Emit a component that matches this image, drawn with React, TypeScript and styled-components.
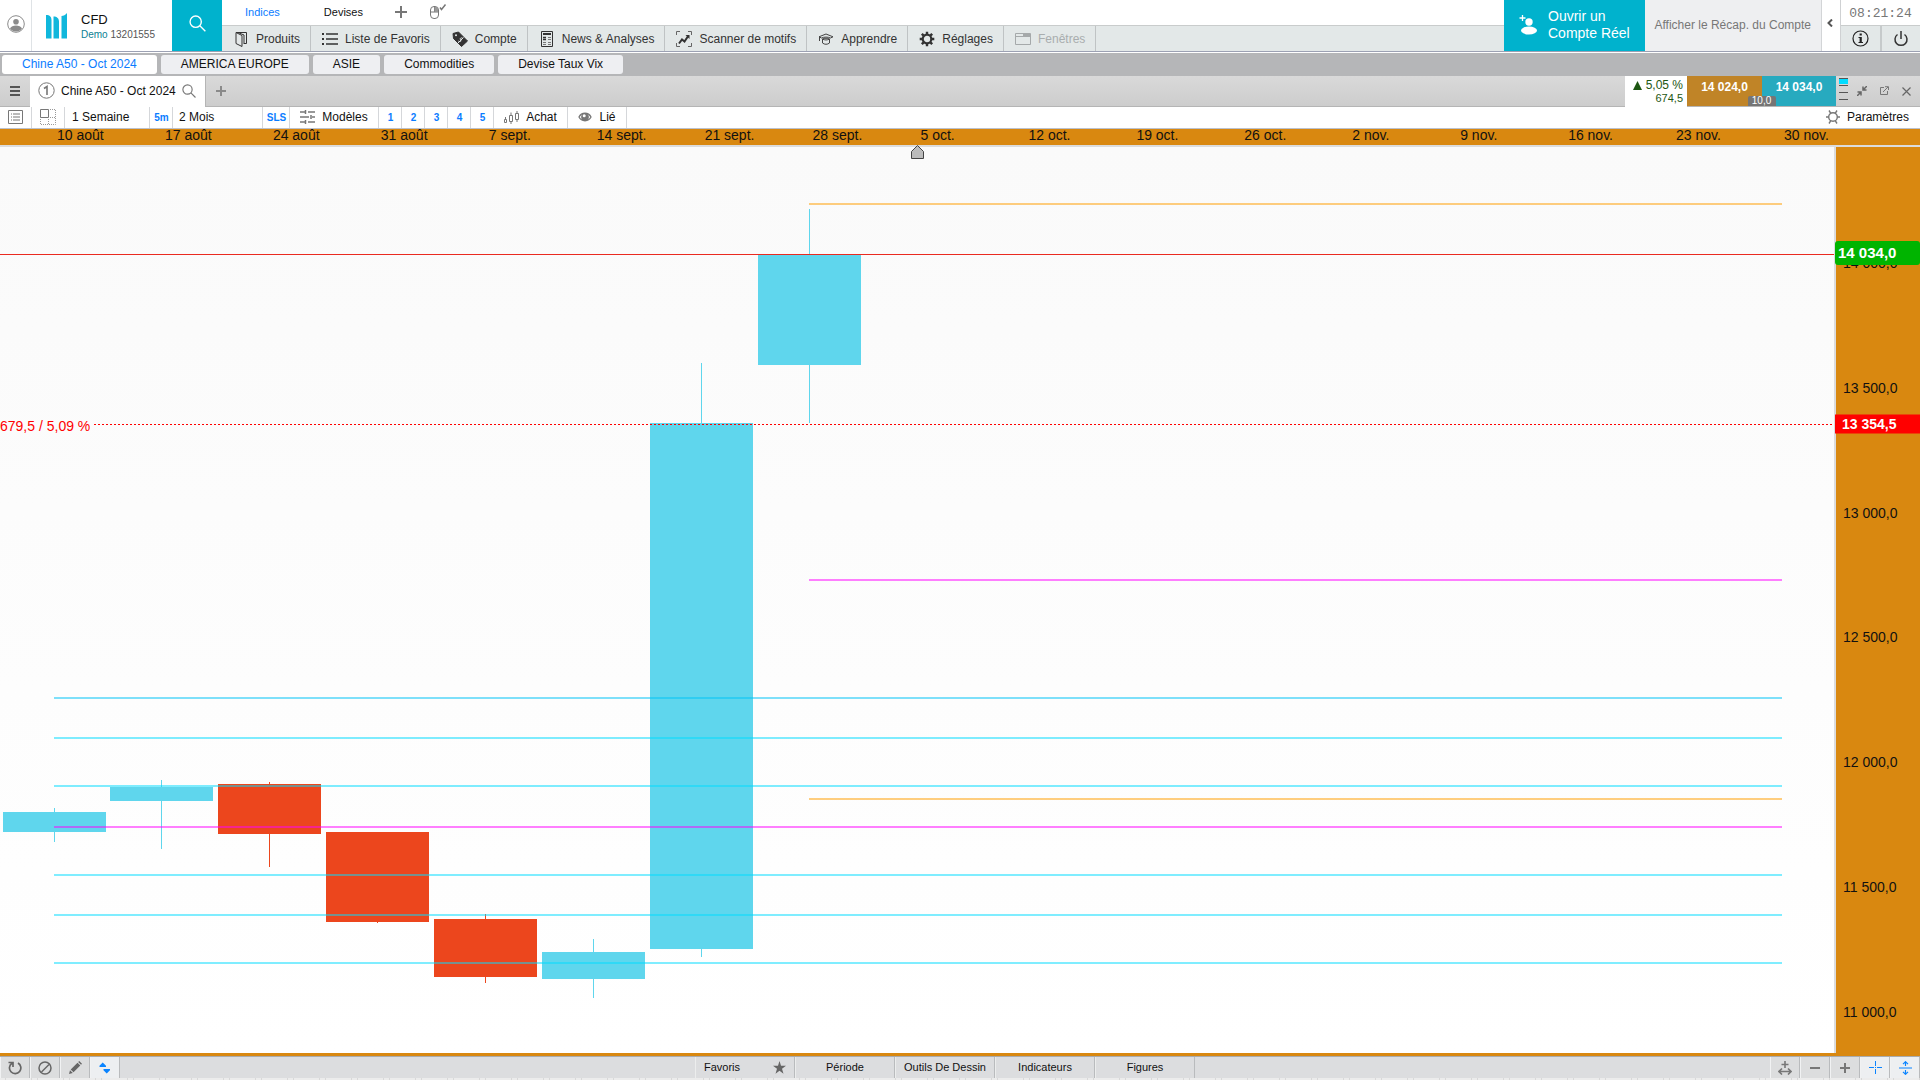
import React from "react";
import styled, { createGlobalStyle } from "styled-components";

const GlobalStyle = createGlobalStyle`
  *, *::before, *::after { box-sizing: border-box; }
  body {
    margin: 0;
    font-family: "Liberation Sans", Arial, sans-serif;
    font-size: 12px;
    color: #111;
    background: #fff;
    overflow: hidden;
  }
  button {
    font: inherit;
    color: inherit;
    border: 0;
    padding: 0;
    background: none;
    cursor: pointer;
    white-space: nowrap;
  }
  svg { display: block; flex: none; }
`;

const ORANGE = "#d98810";
const CYAN = "#00b2cd";

const Page = styled.div`
  display: flex;
  flex-direction: column;
  height: 100vh;
`;

/* ---------- header ---------- */

const Header = styled.header`
  display: flex;
  height: 53px;
  flex: none;
  border-bottom: 1px solid #fff;
  box-shadow: inset 0 -1px #9ca1b3;
  padding-bottom: 1px;
`;

const AvatarButton = styled.button`
  width: 32px;
  border-right: 1px solid #dfe3e6;
  display: grid;
  place-items: center;
  padding-bottom: 4px;
`;

const Brand = styled.div`
  width: 140px;
  display: flex;
  align-items: center;
  gap: 14px;
  padding-left: 14px;
`;

const BrandName = styled.div`
  font-size: 13px;
  line-height: 18px;
`;

const BrandAccount = styled.div`
  font-size: 10px;
  line-height: 12px;
  color: #555;
  span { color: #0b7f93; }
`;

const SearchButton = styled.button`
  width: 50px;
  background: ${CYAN};
  display: grid;
  place-items: center;
  padding-bottom: 4px;
`;

const NavArea = styled.div`
  flex: 1;
  min-width: 0;
  display: flex;
  flex-direction: column;
`;

const TopNav = styled.nav`
  height: 25px;
  display: flex;
  align-items: center;
  padding: 0 0 2px 23px;
`;

const TopTab = styled.button<{ $active?: boolean; $space: number }>`
  font-size: 11px;
  color: ${(p) => (p.$active ? "#0a7cff" : "#111")};
  margin-right: ${(p) => p.$space}px;
`;

const MainNav = styled.nav`
  flex: 1;
  display: flex;
  background: #e3e8e8;
  border-top: 1px solid #c9cccc;
`;

const NavButton = styled.button`
  display: flex;
  align-items: center;
  gap: 7px;
  padding: 0 10px 0 11px;
  border-right: 1px solid #bfc3c4;
  color: #333;
  &:disabled { color: #a9adae; }
`;

const OpenAccount = styled.button`
  width: 141px;
  background: ${CYAN};
  color: #fff;
  font-size: 14px;
  line-height: 17px;
  text-align: left;
  display: flex;
  align-items: center;
  gap: 10px;
  padding: 0 0 2px 15px;
`;

const Summary = styled.button`
  width: 177px;
  background: #eeeff1;
  color: #777;
  text-align: right;
  border-right: 1px solid #d3d5d7;
  padding: 0 10px 2px 0;
`;

const Collapse = styled.button`
  width: 19px;
  display: grid;
  place-items: center;
  border-right: 1px solid #cfd1d3;
  padding: 0 2px 6px 0;
`;

const Corner = styled.div`
  width: 79px;
  display: flex;
  flex-direction: column;
`;

const Clock = styled.time`
  height: 25px;
  line-height: 28px;
  text-align: center;
  font-family: "Liberation Mono", monospace;
  font-size: 13px;
  color: #777;
`;

const CornerRow = styled.div`
  flex: 1;
  display: flex;
  border-top: 1px solid #c9cccc;
  background: #e3e8e8;
`;

const CornerButton = styled.button`
  flex: 1;
  display: grid;
  place-items: center;
  & + & { border-left: 2px solid #c6cacb; }
`;

/* ---------- workspaces ---------- */

const Workspaces = styled.nav`
  flex: none;
  height: 23px;
  background: #b5b6b8;
  display: flex;
  gap: 4px;
  padding: 2px;
`;

const Workspace = styled.button<{ $active?: boolean }>`
  border-radius: 3px;
  padding: 0 20px 2px;
  background: ${(p) => (p.$active ? "#fff" : "#eeeff2")};
  color: ${(p) => (p.$active ? "#0a7cff" : "#111")};
`;

/* ---------- chart tab bar ---------- */

const TabBar = styled.div`
  flex: none;
  height: 31px;
  display: flex;
  background: linear-gradient(#d9d9d9, #cdcdcd);
  border-bottom: 1px solid #b5b5b5;
  padding-right: 4px;
`;

const IconCell = styled.button<{ $width: number }>`
  width: ${(p) => p.$width}px;
  display: grid;
  place-items: center;
`;

const ChartTab = styled.button`
  display: flex;
  align-items: center;
  gap: 6px;
  padding: 0 9px 2px 8px;
  margin-bottom: -1px;
  background: #fff;
  border-right: 1px solid #b5b5b5;
`;

const Spacer = styled.div`
  flex: 1;
`;

const Change = styled.div`
  width: 62px;
  background: #fff;
  margin-bottom: -1px;
  padding: 2px 4px 0 0;
  text-align: right;
  color: #1d5712;
  line-height: 14px;
  white-space: nowrap;
`;

const ChangeLine = styled.div`
  display: flex;
  justify-content: flex-end;
  align-items: center;
  gap: 4px;
`;

const ChangePoints = styled.div`
  font-size: 11px;
  line-height: 12px;
`;

const Quotes = styled.div`
  position: relative;
  display: flex;
  color: #fff;
`;

const Quote = styled.button<{ $color: string }>`
  width: 75px;
  font-weight: bold;
  padding-bottom: 8px;
  background: ${(p) => p.$color};
  & + & { width: 74px; }
`;

const Spread = styled.span`
  position: absolute;
  left: 50%;
  bottom: 0;
  width: 28px;
  margin-left: -14px;
  background: #757575;
  border-radius: 2px 2px 0 0;
  text-align: center;
  font-size: 10px;
  line-height: 10px;
`;

/* ---------- toolbar ---------- */

const Toolbar = styled.div`
  flex: none;
  height: 22px;
  display: flex;
  border-bottom: 1px solid #bcc1cc;
`;

const Tool = styled.button<{ $width: number; $left?: number }>`
  width: ${(p) => p.$width}px;
  display: flex;
  align-items: center;
  justify-content: ${(p) => (p.$left ? "flex-start" : "center")};
  gap: 7px;
  padding-left: ${(p) => p.$left ?? 0}px;
  padding-bottom: 1px;
  border-right: 1px solid #d5d7da;
`;

const Shortcut = styled(Tool)`
  font-size: 10px;
  font-weight: bold;
  padding-top: 1px;
  padding-left: 1px;
  color: #0a7cff;
`;

const Settings = styled.button`
  display: flex;
  align-items: center;
  gap: 7px;
  padding: 0 11px 1px 0;
`;

/* ---------- chart ---------- */

const DateAxis = styled.div`
  flex: none;
  display: flex;
  height: 18px;
  padding: 0 28px 0 57px;
  background: ${ORANGE};
  border-bottom: 2px solid #dcdcdc;
  font-size: 14px;
  line-height: 12px;
`;

const DateLabel = styled.div`
  flex: 1 1 0;
  white-space: nowrap;
`;

const ChartArea = styled.main`
  flex: 1;
  min-height: 0;
  display: flex;
  background: ${ORANGE};
`;

const Plot = styled.div`
  position: relative;
  flex: 1;
  min-width: 0;
  margin-bottom: 3px;
  background: linear-gradient(#fafafa, #fff);
  border-right: 2px solid #dcdcdc;
`;

const PlotDrawing = styled.svg`
  position: absolute;
  inset: 0;
  width: 100%;
  height: 100%;
`;

const PlotNote = styled.div`
  position: absolute;
  left: 0;
  top: 30.8%;
  transform: translateY(-50%);
  font-size: 14px;
  line-height: 16px;
  color: #f00;
`;

const Marker = styled.svg`
  position: absolute;
  left: 50%;
  top: 0;
  margin: -2px 0 0 -6px;
`;

const PriceAxis = styled.aside`
  position: relative;
  width: 84px;
  display: flex;
  flex-direction: column;
  justify-content: space-between;
  padding: 108px 0 36px 7px;
  font-size: 14px;
  line-height: 16px;
`;

const PriceTag = styled.div<{ $live?: boolean }>`
  position: absolute;
  left: -1px;
  right: 0;
  top: ${(p) => (p.$live ? "11.7%" : "30.5%")};
  transform: translateY(-50%);
  padding-left: ${(p) => (p.$live ? 3 : 7)}px;
  border-radius: ${(p) => (p.$live ? 3 : 0)}px;
  background: ${(p) => (p.$live ? "#00b400" : "#f00")};
  color: #fff;
  font-weight: bold;
  font-size: ${(p) => (p.$live ? 15 : 14)}px;
  line-height: ${(p) => (p.$live ? 24 : 19)}px;
`;

/* ---------- footer ---------- */

const Footer = styled.footer`
  flex: none;
  height: 24px;
  display: flex;
  border-top: 1px solid #a9abad;
  padding-bottom: 2px;
  background:
    repeating-linear-gradient(90deg, #ececec 0 5px, #d8d8d8 5px 6px, #ececec 6px 31px, #d8d8d8 31px 32px)
    0 100% / 100% 2px no-repeat,
    #dcdddf;
`;

const FootButton = styled.button<{ $active?: boolean }>`
  width: 30px;
  display: grid;
  place-items: center;
  border-left: 1px solid #f1f2f3;
  border-right: 1px solid #b9bbbd;
  background: ${(p) => (p.$active ? "#edeff1" : "#dcddde")};
`;

const FootMenu = styled.button`
  width: 100px;
  font-size: 11px;
  padding-bottom: 2px;
  border-left: 1px solid #eceded;
  border-right: 1px solid #b9bbbd;
`;

const FootFavorites = styled(FootMenu)`
  display: flex;
  align-items: center;
  justify-content: space-between;
  padding: 0 8px 1px;
`;

/* ---------- icons ---------- */

type IconProps = { w?: number; h?: number; box?: string; color?: string; sw?: number; children: React.ReactNode };

const Icon = ({ w = 16, h = 16, box, color = "#333", sw = 1, children }: IconProps) => (
  <svg
    width={w}
    height={h}
    viewBox={box ?? `0 0 ${w} ${h}`}
    fill="none"
    stroke={color}
    strokeWidth={sw}
    aria-hidden="true"
  >
    {children}
  </svg>
);

const Magnifier = ({ size, color, sw }: { size: number; color: string; sw: number }) => (
  <Icon w={size} h={size} box="0 0 16 16" color={color} sw={sw}>
    <circle cx="6.3" cy="6.3" r="5.3" />
    <path d="M10.2 10.2 15.4 15.4" />
  </Icon>
);

const navItems = [
  {
    label: "Produits",
    icon: (
      <Icon>
        <path d="M3 1.5h10.500v11H11M3 1.500v11l6 3V4.500L3 1.500M5 1.500l6 2.500v9" />
      </Icon>
    ),
  },
  {
    label: "Liste de Favoris",
    icon: (
      <Icon sw={2}>
        <path d="M4 3h12M4 8h12M4 13h12" strokeWidth="1.500" />
        <path d="M0 3h2M0 8h2M0 13h2" />
      </Icon>
    ),
  },
  {
    label: "Compte",
    icon: (
      <Icon>
        <path d="M1 2.500 6.500 1 15.500 10 9.500 15.500 1.500 7.500Z" fill="#333" strokeLinejoin="round" />
        <circle cx="4" cy="4.200" r="1" fill="#e3e8e8" stroke="none" />
        <path d="M11 7.500c-2-1.500-3.500 0-2.500 1.300s0 2.700-2.200 1.200M6 12l5.500-5.500" stroke="#e3e8e8" />
      </Icon>
    ),
  },
  {
    label: "News & Analyses",
    icon: (
      <Icon>
        <path d="M2.500.5h11v15h-11z" />
        <path d="M4 3h8" strokeWidth="2" />
        <path d="M4 6.500h3M4 8.500h3" strokeWidth="1.500" />
        <path d="M9 6.500h3M9 8.500h3M4 11.500h3M9 11.500h3M4 13.500h3M9 13.500h3" stroke="#777" />
      </Icon>
    ),
  },
  {
    label: "Scanner de motifs",
    icon: (
      <Icon>
        <path d="M.5 4V.5H4M12 .5h3.500V4M15.500 12v3.500H12M4 15.500H.5V12" stroke="#666" />
        <path d="M3 12.500 6 8.500l2.500 2L12.500 4.500" strokeWidth="2" />
        <path d="M9.500 4h4v4Z" fill="#333" stroke="none" />
      </Icon>
    ),
  },
  {
    label: "Apprendre",
    icon: (
      <Icon>
        <path d="M1 5.800 8 3l7 2.800-2.500 1.200C10 5.800 6 5.800 3.500 7L1 5.800ZM1.500 6v4M4.500 8v4c2 1.700 5 1.700 7 0V8C9.500 7 6.500 7 4.500 8c2 1.300 5 1.300 7 0" stroke="#444" />
      </Icon>
    ),
  },
  {
    label: "Réglages",
    icon: (
      <Icon>
        <circle cx="8" cy="8" r="4.300" strokeWidth="2.200" />
        <path d="M8 .7v2.600M8 12.700v2.600M.7 8h2.600M12.700 8h2.600M2.800 2.800l1.900 1.900M11.300 11.300l1.900 1.900M13.200 2.800l-1.900 1.900M4.700 11.300l-1.900 1.900" strokeWidth="2.400" />
      </Icon>
    ),
  },
  {
    label: "Fenêtres",
    disabled: true,
    icon: (
      <Icon color="#a5a9aa">
        <path d="M.5 2.500h15v11H.5zM.5 5.500h15" />
        <path d="M8 4h7" strokeWidth="2" />
      </Icon>
    ),
  },
];

/* ---------- data ---------- */

const dates = [
  "10 août", "17 août", "24 août", "31 août", "7 sept.", "14 sept.", "21 sept.", "28 sept.", "5 oct.",
  "12 oct.", "19 oct.", "26 oct.", "2 nov.", "9 nov.", "16 nov.", "23 nov.", "30 nov.",
];

const prices = ["14 000,0", "13 500,0", "13 000,0", "12 500,0", "12 000,0", "11 500,0", "11 000,0"];

// y holds high, body top, body bottom, low
const candles: { x: number; wick: number; y: [number, number, number, number]; up: boolean }[] = [
  { x: 3, wick: 54, y: [661, 665, 685, 695], up: true },
  { x: 110, wick: 161, y: [633, 640, 654, 702], up: true },
  { x: 218, wick: 269, y: [635, 637, 687, 720], up: false },
  { x: 326, wick: 377, y: [685, 685, 775, 776], up: false },
  { x: 434, wick: 485, y: [767, 772, 830, 836], up: false },
  { x: 542, wick: 593, y: [792, 805, 832, 851], up: true },
  { x: 650, wick: 701, y: [216, 276, 802, 810], up: true },
  { x: 758, wick: 809, y: [62, 108, 218, 276], up: true },
];

const levels = [
  { x: 809, y: 56, color: "#ff9d00" },
  { x: 809, y: 432, color: "#ff00ff" },
  { x: 54, y: 550, color: "#00c4f8" },
  { x: 54, y: 590, color: "#00dcff" },
  { x: 54, y: 638, color: "#00dcff" },
  { x: 809, y: 651, color: "#ff9d00" },
  { x: 54, y: 679, color: "#ff00ff" },
  { x: 54, y: 727, color: "#00dcff" },
  { x: 54, y: 767, color: "#00dcff" },
  { x: 54, y: 815, color: "#00dcff" },
];

const ChartDrawing = () => (
  <PlotDrawing viewBox="0 0 1834 906" preserveAspectRatio="none" shapeRendering="crispEdges" role="img" aria-label="Chine A50 - Oct 2024">
    {candles.map(({ x, wick, y, up }) => (
      <g key={x} fill={up ? "#5fd6ed" : "#ec461d"}>
        <rect x={wick} y={y[0]} width="1" height={y[3] - y[0]} />
        <rect x={x} y={y[1]} width="103" height={y[2] - y[1]} />
      </g>
    ))}
    {levels.map((l) => (
      <rect key={l.y} x={l.x} y={l.y} width={1782 - l.x} height="2" fill={l.color} fillOpacity=".5" />
    ))}
    <rect x="0" y="107" width="1834" height="1" fill="#ea2a20" />
    <path d="M94 277.500H1834" stroke="#f00" strokeDasharray="2 2" />
  </PlotDrawing>
);

export default function App() {
  return (
    <Page>
      <GlobalStyle />
      <Header>
        <AvatarButton aria-label="Profil">
          <Icon w={18} h={18} color="#8b8b8b">
            <circle cx="9" cy="9" r="8.300" />
            <circle cx="9" cy="6.800" r="2.800" fill="#8b8b8b" stroke="none" />
            <path d="M3 13.500c1.500-4 10.500-4 12 0-2.500 4-9.500 4-12 0Z" fill="#8b8b8b" stroke="none" />
          </Icon>
        </AvatarButton>
        <Brand>
          <Icon w={21} h={26} color="none">
            <path d="M0 2c4 0 5.500 2 5.500 5v18.500H0ZM7.500 3.500c3.500 0 5.500 2 5.500 5v17H7.500ZM15.500 3c2 0 4-1 5.500-3v25.500h-5.500Z" fill="#10b7dc" />
          </Icon>
          <div>
            <BrandName>CFD</BrandName>
            <BrandAccount><span>Demo</span> 13201555</BrandAccount>
          </div>
        </Brand>
        <SearchButton aria-label="Rechercher">
          <Magnifier size={17} color="#fff" sw={1.3} />
        </SearchButton>
        <NavArea>
          <TopNav>
            <TopTab $active $space={44}>Indices</TopTab>
            <TopTab $space={32}>Devises</TopTab>
            <TopTab $space={22} aria-label="Ajouter">
              <Icon w={12} h={12} color="#777" sw={2}><path d="M6 0v12M0 6h12" /></Icon>
            </TopTab>
            <TopTab $space={0} aria-label="Trading en un clic">
              <Icon w={18} h={16} color="#777">
                <rect x="1.500" y="2.500" width="8" height="12" rx="3.500" />
                <path d="M1.500 8h8M5.500 2.500v5.500" />
                <path d="M5.500 3H9v5H5.500Z" fill="#999" stroke="none" />
                <path d="m11 3.500 1.500 2L16.500.5" strokeWidth="1.500" />
              </Icon>
            </TopTab>
          </TopNav>
          <MainNav>
            {navItems.map((n) => (
              <NavButton key={n.label} disabled={n.disabled}>{n.icon}{n.label}</NavButton>
            ))}
          </MainNav>
        </NavArea>
        <OpenAccount>
          <Icon w={19} h={20} color="#fff" sw={1.3}>
            <path d="M3.500 0v6M.5 3h6" />
            <circle cx="10" cy="7" r="3.700" fill="#fff" stroke="none" />
            <ellipse cx="10" cy="15.500" rx="8" ry="4" fill="#fff" stroke="none" />
          </Icon>
          <span>Ouvrir un<br />Compte Réel</span>
        </OpenAccount>
        <Summary>Afficher le Récap. du Compte</Summary>
        <Collapse aria-label="Réduire">
          <Icon w={6} h={8} color="#555" sw={2}><path d="M5 .5 1.500 4 5 7.500" /></Icon>
        </Collapse>
        <Corner>
          <Clock>08:21:24</Clock>
          <CornerRow>
            <CornerButton aria-label="Informations">
              <Icon w={17} h={17} color="#222" sw={1.2}>
                <circle cx="8.500" cy="8.500" r="7.500" />
                <path d="M8.700 3.500v2M8.700 7v6" strokeWidth="2.200" />
                <path d="M6.500 7.500h2M6.500 12.500h4.500" />
              </Icon>
            </CornerButton>
            <CornerButton aria-label="Déconnexion">
              <Icon w={16} h={16} color="#333" sw={1.5}>
                <path d="M4.500 3.500a6 6 0 1 0 7 0M8 0v8" />
              </Icon>
            </CornerButton>
          </CornerRow>
        </Corner>
      </Header>

      <Workspaces>
        <Workspace $active>Chine A50 - Oct 2024</Workspace>
        <Workspace>AMERICA EUROPE</Workspace>
        <Workspace>ASIE</Workspace>
        <Workspace>Commodities</Workspace>
        <Workspace>Devise Taux Vix</Workspace>
      </Workspaces>

      <TabBar>
        <IconCell $width={30} aria-label="Menu">
          <Icon w={10} h={10} color="#555" sw={2}><path d="M0 1h10M0 5h10M0 9h10" /></Icon>
        </IconCell>
        <ChartTab>
          <Icon w={17} h={17} color="#777">
            <circle cx="8.500" cy="8.500" r="7.700" />
            <path d="M6 6.500 9 4.500V13" strokeWidth="1.600" />
          </Icon>
          Chine A50 - Oct 2024
          <Magnifier size={14} color="#777" sw={1.3} />
        </ChartTab>
        <IconCell $width={30} aria-label="Nouvel onglet">
          <Icon w={10} h={10} color="#8a8a8a" sw={2}><path d="M5 0v10M0 5h10" /></Icon>
        </IconCell>
        <Spacer />
        <Change>
          <ChangeLine>
            <Icon w={9} h={9} color="none"><path d="M4.500 0 9 9H0Z" fill="#1d5712" /></Icon>
            5,05 %
          </ChangeLine>
          <ChangePoints>674,5</ChangePoints>
        </Change>
        <Quotes>
          <Quote $color="#c08427">14 024,0</Quote>
          <Quote $color="#27aabf">14 034,0</Quote>
          <Spread>10,0</Spread>
        </Quotes>
        <IconCell $width={16} aria-label="Profondeur">
          <Icon w={10} h={27} color="#555">
            <path d="M0 0h9v6H0Z" fill="#00dcff" stroke="none" />
            <path d="M0 .5h9M0 7.500h9M0 14.500h9M0 21.500h9" />
          </Icon>
        </IconCell>
        <IconCell $width={20} aria-label="Réduire le graphique">
          <Icon w={10} h={10} color="#666" sw={1.5}>
            <path d="M10 0 6.500 3.500M6 .5v3.500h3.500M0 10l3.500-3.500M.5 6h3.500v3.500" />
          </Icon>
        </IconCell>
        <IconCell $width={24} aria-label="Détacher">
          <Icon w={10} h={10} color="#777">
            <path d="M5 1.500H1.500v7h7V5M4 6l5-5M6 .7h3.500V4" />
          </Icon>
        </IconCell>
        <IconCell $width={20} aria-label="Fermer">
          <Icon w={9} h={9} color="#666" sw={1.2}><path d="m.5.5 8 8M8.500.5l-8 8" /></Icon>
        </IconCell>
      </TabBar>

      <Toolbar>
        <Tool $width={32} aria-label="Liste">
          <Icon w={15} h={14} color="#777">
            <path d="M.5.5h14v13H.5zM5 4h7M5 7h7M5 10h7M3 4h1M3 7h1M3 10h1" />
          </Icon>
        </Tool>
        <Tool $width={33} aria-label="Disposition">
          <Icon w={16} h={16} color="#777">
            <path d="M.5.500h8v8H.5z" />
            <path d="M10 .5h5.500v15H.5V10M10 8.500h5.500M8.500 10v5.500" stroke="#999" strokeDasharray="1 1" />
          </Icon>
        </Tool>
        <Tool $width={85} $left={7}>1 Semaine</Tool>
        <Shortcut $width={23}>5m</Shortcut>
        <Tool $width={90} $left={6}>2 Mois</Tool>
        <Shortcut $width={27}>SLS</Shortcut>
        <Tool $width={89}>
          <Icon w={15} h={14} color="#777" sw={1.5}>
            <path d="M0 2h5M8 2h7M0 7h9M12 7h3M0 12h5M8 12h7" />
            <path d="M5.500 0v4M11 5v4M5.500 10v4" />
          </Icon>
          Modèles
        </Tool>
        {["1", "2", "3", "4", "5"].map((n) => (
          <Shortcut key={n} $width={23}>{n}</Shortcut>
        ))}
        <Tool $width={74}>
          <Icon w={15} h={13} color="#777">
            <path d="M.5 8.500h2v3h-2zM5.500 4.500h3v6h-3zM11.500 2.500h3v6h-3zM7 1.500v3M7 10.500V13M13 0v2.500M13 8.500V11M1.500 6v2" />
          </Icon>
          Achat
        </Tool>
        <Tool $width={59}>
          <Icon w={14} h={12} color="#777" sw={1.3}>
            <path d="M1 6c2.500-5 9.500-5 12 0-2.500 5-9.500 5-12 0Z" />
            <circle cx="7" cy="6" r="3.200" fill="#777" />
            <circle cx="6.200" cy="4.800" r="1.500" fill="#fff" stroke="none" />
          </Icon>
          Lié
        </Tool>
        <Spacer />
        <Settings>
          <Icon w={14} h={14} color="#777" sw={1.4}>
            <circle cx="7" cy="7" r="4.300" />
            <path d="M0 7h2.700M11.300 7H14M3 .5l1.800 2.800M11 .5 9.200 3.300M3 13.500l1.800-2.800M11 13.500l-1.800-2.800" />
          </Icon>
          Paramètres
        </Settings>
      </Toolbar>

      <DateAxis>
        {dates.map((d) => <DateLabel key={d}>{d}</DateLabel>)}
      </DateAxis>

      <ChartArea>
        <Plot>
          <ChartDrawing />
          <PlotNote>679,5 / 5,09 %</PlotNote>
          <Marker width="13" height="14" viewBox="0 0 13 14" fill="#bbb" stroke="#444">
            <path d="M.5 13.500V6.500L6.500.5l6 6v7Z" />
          </Marker>
        </Plot>
        <PriceAxis>
          {prices.map((p) => <div key={p}>{p}</div>)}
          <PriceTag $live>14 034,0</PriceTag>
          <PriceTag>13 354,5</PriceTag>
        </PriceAxis>
      </ChartArea>

      <Footer>
        <FootButton aria-label="Actualiser">
          <Icon w={14} h={14} color="#666" sw={1.7}>
            <path d="M4 2.200a5.700 5.700 0 1 0 6-.2M.5 1.500H5v4.500" />
          </Icon>
        </FootButton>
        <FootButton aria-label="Effacer">
          <Icon w={14} h={14} color="#666" sw={1.5}>
            <circle cx="7" cy="7" r="6" /><path d="M3.500 11 11 3.500" />
          </Icon>
        </FootButton>
        <FootButton aria-label="Dessiner">
          <Icon w={13} h={13} color="none">
            <path d="M0 13 1 9.200 3.800 12ZM1.700 8.500 8.500 1.700 11.300 4.500 4.500 11.300ZM9.200 1 10.200 0 13 2.800 12 3.800Z" fill="#666" />
          </Icon>
        </FootButton>
        <FootButton $active aria-label="Haut et bas">
          <Icon w={12} h={12} color="none">
            <path d="M.5 5V3.700L3.700.5 7 3.700V5ZM4.500 7H11v1.300L7.700 11.500 4.500 8.300Z" fill="#0a84ff" />
          </Icon>
        </FootButton>
        <Spacer />
        <FootFavorites>
          Favoris
          <Icon w={13} h={13} color="none">
            <path d="M6.500 0 8 4.800h5L9 7.800l1.500 5-4-3-4 3 1.500-5-4-3h5Z" fill="#666" />
          </Icon>
        </FootFavorites>
        <FootMenu>Période</FootMenu>
        <FootMenu>Outils De Dessin</FootMenu>
        <FootMenu>Indicateurs</FootMenu>
        <FootMenu>Figures</FootMenu>
        <Spacer />
        <FootButton aria-label="Ajuster la largeur">
          <Icon w={14} h={14} color="#777" sw={1.6}>
            <path d="M7 0v7M3.500 3.500h7M1 10.500h12M4 7.500l-3 3 3 3M10 7.500l3 3-3 3" />
          </Icon>
        </FootButton>
        <FootButton aria-label="Zoom arrière">
          <Icon w={10} h={10} color="#777" sw={2}><path d="M0 5h10" /></Icon>
        </FootButton>
        <FootButton aria-label="Zoom avant">
          <Icon w={10} h={10} color="#777" sw={2}><path d="M5 0v10M0 5h10" /></Icon>
        </FootButton>
        <FootButton $active aria-label="Réticule">
          <Icon w={13} h={13} color="#0a84ff">
            <path d="M6.500 0v5M6.500 8v5M0 6.500h5M8 6.500h5M6 6.500h1" />
          </Icon>
        </FootButton>
        <FootButton $active aria-label="Échelle verticale">
          <Icon w={13} h={14} color="#0a84ff" sw={1.2}>
            <path d="M0 7h13M6.500 1v4M6.500 9v4M4 3.200 6.500.7 9 3.200M4 10.800l2.500 2.500L9 10.800" />
          </Icon>
        </FootButton>
      </Footer>
    </Page>
  );
}
